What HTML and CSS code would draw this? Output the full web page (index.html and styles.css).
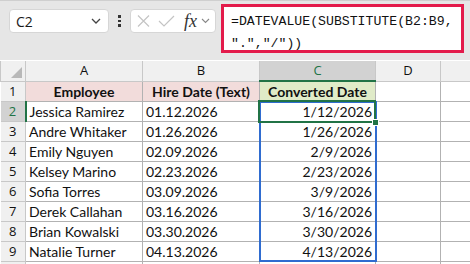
FILE: index.html
```html
<!DOCTYPE html>
<html lang="en">
<head>
  <meta charset="UTF-8">
  <meta name="viewport" content="width=device-width, initial-scale=1.0">
  <title>Converted Dates</title>
  <link rel="stylesheet" href="styles.css">
</head>
<body>
  <!-- Name box and formula bar -->
  <div class="toolbar">
    <div class="name-box">
      <span>C2</span>
      <svg width="10" height="6" viewBox="0 0 10 6"><path d="M1 1 L5 5 L9 1" fill="none" stroke="#444" stroke-width="1.3"/></svg>
    </div>
    <div class="dots"><i></i><i></i><i></i></div>
    <div class="fx-buttons">
      <svg width="13" height="12" viewBox="0 0 13 12"><path d="M1 0.5 L12 11.5 M12 0.5 L1 11.5" stroke="#c4c4c4" stroke-width="1.2"/></svg>
      <svg width="17" height="12" viewBox="0 0 17 12"><path d="M1 6 L6 11 L16 1" fill="none" stroke="#c4c4c4" stroke-width="1.2"/></svg>
      <span class="fx">fx</span>
      <svg width="9" height="6" viewBox="0 0 9 6"><path d="M1 1 L4.5 4.5 L8 1" fill="none" stroke="#888" stroke-width="1.1"/></svg>
    </div>
    <div class="formula">=DATEVALUE(SUBSTITUTE(B2:B9,<br>".","/"))</div>
  </div>

  <!-- Sheet -->
  <table class="sheet">
    <colgroup>
      <col class="col-rh"><col class="col-a"><col class="col-b"><col class="col-c"><col class="col-d"><col class="col-e">
    </colgroup>
    <tr class="head">
      <th class="corner"><span class="tri"></span></th>
      <th>A</th><th>B</th><th class="on">C</th><th>D</th><th></th>
    </tr>
    <tr>
      <th class="rh">1</th>
      <td class="title pink">Employee</td>
      <td class="title pink">Hire Date (Text)</td>
      <td class="title green">Converted Date</td>
      <td></td><td></td>
    </tr>
    <tr>
      <th class="rh on">2</th>
      <td>Jessica Ramirez</td><td>01.12.2026</td>
      <td class="num sel">1/12/2026<div class="range"></div><div class="cursor"><span class="handle"></span></div></td>
      <td></td><td></td>
    </tr>
    <tr><th class="rh">3</th><td>Andre Whitaker</td><td>01.26.2026</td><td class="num">1/26/2026</td><td></td><td></td></tr>
    <tr><th class="rh">4</th><td>Emily Nguyen</td><td>02.09.2026</td><td class="num">2/9/2026</td><td></td><td></td></tr>
    <tr><th class="rh">5</th><td>Kelsey Marino</td><td>02.23.2026</td><td class="num">2/23/2026</td><td></td><td></td></tr>
    <tr><th class="rh">6</th><td>Sofia Torres</td><td>03.09.2026</td><td class="num">3/9/2026</td><td></td><td></td></tr>
    <tr><th class="rh">7</th><td>Derek Callahan</td><td>03.16.2026</td><td class="num">3/16/2026</td><td></td><td></td></tr>
    <tr><th class="rh">8</th><td>Brian Kowalski</td><td>03.30.2026</td><td class="num">3/30/2026</td><td></td><td></td></tr>
    <tr><th class="rh">9</th><td>Natalie Turner</td><td>04.13.2026</td><td class="num">4/13/2026</td><td></td><td></td></tr>
    <tr><th class="rh"></th><td></td><td></td><td></td><td></td><td></td></tr>
  </table>
</body>
</html>
```

FILE: styles.css
```css
body {
  margin: 0;
  width: 470px;
  height: 264px;
  overflow: hidden;
  background: #fff;
  font-family: "Lato", "Liberation Sans", sans-serif;
}

/* Top bar */
.toolbar {
  height: 60px;
  box-sizing: border-box;
  background: #e6e6e6;
  border-top: 1px solid #cfcfcf;
  display: flex;
  align-items: flex-start;
  padding: 3px 5px 0 9px;
}

.name-box {
  margin-top: 5px;
  width: 100px;
  height: 24px;
  box-sizing: border-box;
  background: #fff;
  border: 1px solid #d6d6d6;
  border-radius: 4px;
  display: flex;
  align-items: center;
  justify-content: space-between;
  padding: 0 7px 0 6px;
  font-family: "Open Sans", sans-serif;
  font-size: 14px;
  color: #1a1a1a;
}

.dots {
  margin: 11px 0 0 9px;
  width: 3px;
  display: flex;
  flex-direction: column;
  gap: 2px;
}

.dots i {
  display: block;
  width: 3px;
  height: 2.5px;
  background: #333;
}

.fx-buttons {
  margin: 5px 0 0 9px;
  width: 86px;
  height: 24px;
  box-sizing: border-box;
  background: #fff;
  border: 1px solid #d6d6d6;
  border-radius: 4px;
  display: flex;
  align-items: center;
  padding: 0 4px 0 6px;
  gap: 8px;
}

.fx-buttons .fx {
  margin-left: 1px;
  margin-right: -4px;
  font-family: "Liberation Serif", serif;
  font-style: italic;
  font-size: 18px;
  color: #333;
  line-height: 1;
}

.formula {
  margin-left: 5px;
  width: 243px;
  height: 49px;
  box-sizing: border-box;
  background: #fff;
  border: 3px solid #e31b4b;
  padding: 4px 0 0 7px;
  font-family: "Liberation Mono", monospace;
  font-size: 13.2px;
  line-height: 22px;
  color: #111;
  white-space: nowrap;
}

/* Sheet grid */
.sheet {
  border-collapse: collapse;
  table-layout: fixed;
  width: 504px;
  font-size: 14px;
  color: #111;
  margin-top: 1px;
}

.col-rh { width: 25px; }
.col-a { width: 117px; }
.col-b { width: 117px; }
.col-c { width: 116px; }
.col-d { width: 65px; }
.col-e { width: 64px; }

.sheet td,
.sheet th {
  height: 19px;
  padding: 0 3px;
  border: 1px solid #b2b2b2;
  white-space: nowrap;
  overflow: visible;
  line-height: 19px;
}

.sheet td {
  text-align: left;
}

.head th {
  height: 18px;
  background: #f0f0f0;
  font-weight: normal;
  border-color: #c8c8c8;
  border-top: none;
  font-family: "Open Sans", sans-serif;
  font-size: 13px;
}

.head th.on {
  background: #d2d2d2;
  color: #217346;
  border-bottom: 2px solid #217346;
}

.corner {
  position: relative;
  border-left: none;
}

.tri {
  position: absolute;
  right: 3px;
  bottom: 3px;
  width: 0;
  height: 0;
  border-left: 11px solid transparent;
  border-bottom: 11px solid #b8b8b8;
}

.sheet th.rh {
  background: #f0f0f0;
  font-weight: normal;
  text-align: center;
  border-color: #c8c8c8;
  border-left: none;
  padding: 0;
  font-family: "Open Sans", sans-serif;
  font-size: 13px;
}

.sheet th.rh.on {
  background: #d2d2d2;
  color: #217346;
  border-right: 2px solid #217346;
}

.title {
  font-weight: bold;
  text-align: center !important;
}

.pink { background: #f2dcdb; }
.green { background: #e0ebc8; }

.num {
  text-align: right !important;
}

/* Selection overlays */
.sel {
  position: relative;
}

.range {
  position: absolute;
  left: -1px;
  top: -1px;
  width: 114px;
  height: 157px;
  border: 2px solid #2f6cd0;
  pointer-events: none;
}

.cursor {
  position: absolute;
  left: -2px;
  top: -2px;
  width: 114px;
  height: 19px;
  border: 2px solid #217346;
}

.handle {
  position: absolute;
  right: -5px;
  bottom: -5px;
  width: 5px;
  height: 5px;
  background: #217346;
  border: 1px solid #fff;
}
```
